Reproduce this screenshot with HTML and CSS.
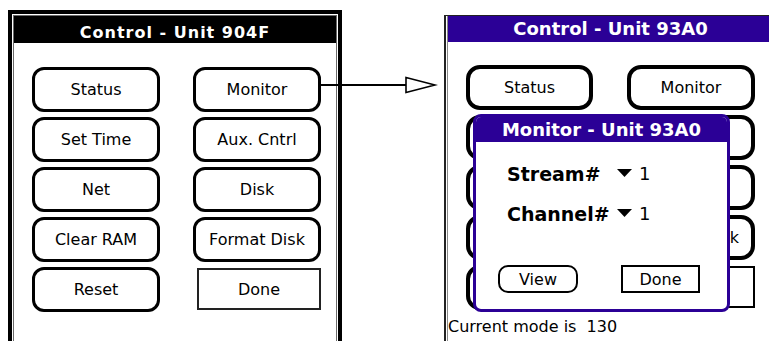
FILE: index.html
```html
<!DOCTYPE html>
<html lang="en">
<head>
    <meta charset="UTF-8">
    <meta name="viewport" content="width=device-width, initial-scale=1.0">
    <title>Control - Unit screens</title>
    <link rel="stylesheet" href="styles.css">
</head>
<body>
    <div class="stage">
        <!-- Monochrome device -->
        <div class="palm palm-mono">
            <div class="screen screen-mono">
                <div class="title title-mono">Control - Unit 904F</div>
                <div class="button-grid grid-mono">
                    <div class="btn btn-mono">Status</div>
                    <div class="btn btn-mono">Monitor</div>
                    <div class="btn btn-mono">Set Time</div>
                    <div class="btn btn-mono">Aux. Cntrl</div>
                    <div class="btn btn-mono">Net</div>
                    <div class="btn btn-mono">Disk</div>
                    <div class="btn btn-mono">Clear RAM</div>
                    <div class="btn btn-mono">Format Disk</div>
                    <div class="btn btn-mono">Reset</div>
                    <div class="btn btn-flat">Done</div>
                </div>
            </div>
        </div>

        <!-- Color device with Monitor dialog open -->
        <div class="palm palm-color">
            <div class="screen screen-color">
                <div class="title title-color">Control - Unit 93A0</div>
                <div class="button-grid grid-color">
                    <div class="btn btn-color">Status</div>
                    <div class="btn btn-color">Monitor</div>
                    <div class="btn btn-color">Set Time</div>
                    <div class="btn btn-color">Aux. Cntrl</div>
                    <div class="btn btn-color">Net</div>
                    <div class="btn btn-color">Disk</div>
                    <div class="btn btn-color">Clear RAM</div>
                    <div class="btn btn-color">Format Disk</div>
                    <div class="btn btn-color">Reset</div>
                    <div class="btn btn-flat btn-flat-color">Done</div>
                </div>
                <div class="status-line">Current mode is&nbsp; 130</div>

                <div class="dialog">
                    <div class="dialog-title">Monitor - Unit 93A0</div>
                    <div class="dialog-body">
                        <div class="field">
                            <span class="field-label">Stream#</span>
                            <svg class="trigger" width="15" height="8" viewBox="0 0 15 8"><polygon points="0,0 15,0 7.5,8" fill="#000"/></svg>
                            <span class="field-value">1</span>
                        </div>
                        <div class="field">
                            <span class="field-label">Channel#</span>
                            <svg class="trigger" width="15" height="8" viewBox="0 0 15 8"><polygon points="0,0 15,0 7.5,8" fill="#000"/></svg>
                            <span class="field-value">1</span>
                        </div>
                    </div>
                    <div class="dialog-actions">
                        <div class="dlg-btn dlg-btn-round">View</div>
                        <div class="dlg-btn dlg-btn-rect">Done</div>
                    </div>
                </div>
            </div>
        </div>
    </div>

    <!-- Arrow from Monitor to the color screen -->
    <svg class="connector" width="118" height="19" viewBox="0 0 118 19">
        <line x1="0" y1="9" x2="86" y2="9" stroke="#000" stroke-width="2"/>
        <polygon points="86,1.5 115,9 86,16.5" fill="#fff" stroke="#000" stroke-width="1.6"/>
    </svg>
</body>
</html>
```

FILE: styles.css
```css
body {
    margin: 0;
    width: 769px;
    height: 341px;
    overflow: hidden;
    position: relative;
    background-color: #fff;
    color: #000;
    font-family: "DejaVu Sans", sans-serif;
}

.stage {
    display: flex;
    align-items: flex-start;
}

.palm {
    flex: none;
    box-sizing: border-box;
}

.screen {
    height: 100%;
    box-sizing: border-box;
}

.title {
    color: #fff;
    font-weight: bold;
    text-align: center;
    white-space: nowrap;
}

.button-grid {
    display: grid;
    grid-auto-rows: 45px;
    row-gap: 5px;
}

.btn {
    display: flex;
    align-items: center;
    justify-content: center;
    box-sizing: border-box;
    white-space: nowrap;
}

/* Monochrome device */

.palm-mono {
    width: 334px;
    height: 340px;
    margin: 10px 0 0 8px;
    border: 4px solid #000;
    padding: 1px;
}

.screen-mono {
    border: 1px solid #6a6a6a;
}

.title-mono {
    height: 27px;
    padding-top: 7px;
    box-sizing: border-box;
    line-height: 20px;
    font-size: 16px;
    letter-spacing: 1px;
    background-color: #000;
}

.grid-mono {
    grid-template-columns: 128px 128px;
    column-gap: 33px;
    padding: 24px 0 0 18px;
}

.btn-mono {
    border: 3px solid #000;
    border-radius: 12px;
    font-size: 16px;
}

.btn-flat {
    border: 2px solid #222;
    margin: 1px 0 2px 4px;
    font-size: 16px;
}

/* Color device */

.palm-color {
    width: 329px;
    height: 330px;
    margin: 15px 0 0 102px;
    border-left: 2px solid #222;
    border-top: 1px solid #222;
    padding-left: 1px;
}

.screen-color {
    position: relative;
    border-left: 1px solid #888;
}

.title-color {
    height: 26px;
    line-height: 26px;
    font-size: 18px;
    background-color: #2b0096;
}

.grid-color {
    grid-template-columns: 127px 128px;
    column-gap: 34px;
    padding: 23px 0 0 18px;
}

.btn-color {
    border: 4px solid #000;
    border-radius: 14px;
    font-size: 16px;
}

.btn-flat-color {
    border-color: #000;
}

.status-line {
    margin-top: 7px;
    font-size: 16px;
    line-height: 19px;
    white-space: nowrap;
}

/* Monitor dialog */

.dialog {
    position: absolute;
    left: 25px;
    top: 98px;
    width: 257px;
    height: 198px;
    box-sizing: border-box;
    display: flex;
    flex-direction: column;
    border: 3px solid #2b0096;
    border-radius: 8px;
    background-color: #fff;
    overflow: hidden;
}

.dialog-title {
    height: 25px;
    line-height: 25px;
    background-color: #2b0096;
    color: #fff;
    font-size: 18px;
    font-weight: bold;
    text-align: center;
    white-space: nowrap;
}

.dialog-body {
    display: flex;
    flex-direction: column;
    row-gap: 18px;
    padding: 21px 0 0 31px;
}

.field {
    display: flex;
    align-items: center;
    height: 22px;
}

.field-label {
    width: 110px;
    font-size: 19px;
    font-weight: bold;
    line-height: 22px;
}

.trigger {
    margin-top: -2px;
}

.field-value {
    margin-left: 7px;
    font-size: 18px;
    line-height: 22px;
}

.dialog-actions {
    margin-top: auto;
    display: flex;
    justify-content: space-between;
    padding: 0 27px 16px 22px;
}

.dlg-btn {
    display: flex;
    align-items: center;
    justify-content: center;
    height: 28px;
    box-sizing: border-box;
    border: 2px solid #000;
    font-size: 16px;
}

.dlg-btn-round {
    width: 80px;
    border-radius: 10px;
}

.dlg-btn-rect {
    width: 79px;
}

/* Arrow overlay */

.connector {
    position: absolute;
    left: 320px;
    top: 76px;
}
```
